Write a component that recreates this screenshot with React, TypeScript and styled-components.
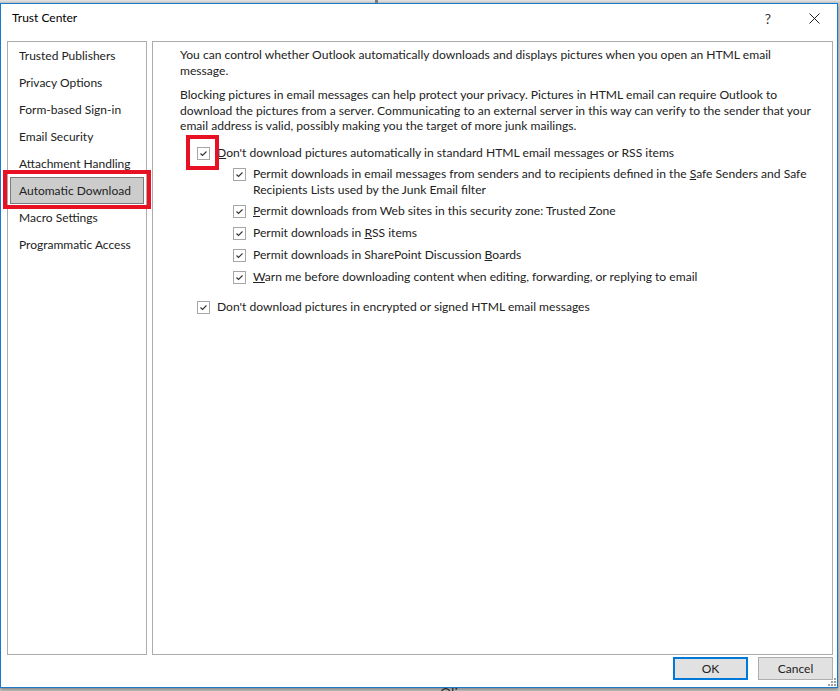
import React from "react";
import styled, { createGlobalStyle } from "styled-components";

const GlobalStyle = createGlobalStyle`
  html, body {
    margin: 0;
    padding: 0;
  }
  body {
    font-family: Lato, "Liberation Sans", Arial, sans-serif;
    font-size: 12px;
    color: #222;
  }
`;

const Screen = styled.div`
  width: 840px;
  height: 691px;
  overflow: hidden;
  background: #c9c9c9;
  display: flex;
  flex-direction: column;
`;

const TopStrip = styled.div`
  height: 3px;
  background: linear-gradient(#e6e6e6, #c4c4c4);
  position: relative;

  &:after {
    position: absolute;
    content: "";
    left: 375px;
    top: 0;
    width: 3px;
    height: 3px;
    background: #7d7d7d;
  }
`;

const Dialog = styled.div`
  width: 838px;
  height: 685px;
  box-sizing: border-box;
  border: 1px solid #1c79c9;
  background: #fff;
  display: flex;
  flex-direction: column;
  position: relative;
  box-shadow: 0 2px 3px rgba(0, 0, 0, 0.35);
`;

const BottomStrip = styled.div`
  height: 3px;
  overflow: hidden;
  padding-left: 440px;
  background: #cfcfcf;
  font-size: 14px;
  line-height: 10px;
  color: #333;
`;

const TitleBar = styled.div`
  height: 37px;
  display: flex;
  align-items: flex-start;
  padding-left: 11px;
`;

const Title = styled.div`
  flex: 1;
  line-height: 28px;
  font-size: 12px;
  color: #000;
`;

const TitleButton = styled.div`
  width: 46px;
  height: 28px;
  display: flex;
  align-items: center;
  justify-content: center;
  font-size: 14px;
  color: #333;
`;

const Body = styled.div`
  height: 614px;
  display: flex;
  gap: 5px;
  padding: 0 4px 0 6px;
`;

const NavPanel = styled.ul`
  width: 140px;
  box-sizing: border-box;
  border: 1px solid #acacac;
  margin: 0;
  padding: 0;
  list-style: none;
`;

const NavItem = styled.li<{ $selected?: boolean }>`
  position: relative;
  height: 27px;
  box-sizing: border-box;
  margin: 0 2px;
  padding-left: 8px;
  display: flex;
  align-items: center;
  border: 1px solid ${(p) => (p.$selected ? "#7a7a7a" : "transparent")};
  background: ${(p) => (p.$selected ? "#cccccc" : "transparent")};
  color: #222;
  white-space: nowrap;
`;

const Mark = styled.span<{ $t: number; $r: number; $b: number; $l: number }>`
  position: absolute;
  top: ${(p) => p.$t}px;
  right: ${(p) => p.$r}px;
  bottom: ${(p) => p.$b}px;
  left: ${(p) => p.$l}px;
  border: 4px solid #e81123;
  pointer-events: none;
`;

const ContentPanel = styled.div`
  flex: 1;
  box-sizing: border-box;
  border: 1px solid #acacac;
  padding: 5px 0 0 27px;
`;

const Para = styled.p`
  margin: 0 0 9px;
  line-height: 15.5px;
  font-size: 12.1px;
  white-space: nowrap;
`;

const OptionRow = styled.div<{ $indent?: boolean; $gap: number }>`
  display: flex;
  align-items: flex-start;
  margin-top: ${(p) => p.$gap}px;
  padding-left: ${(p) => (p.$indent ? 53 : 17)}px;
  line-height: 16px;
  font-size: 12.1px;
  white-space: nowrap;
`;

const BoxWrap = styled.span`
  position: relative;
  flex: none;
  margin: 2px 7px 0 0;
`;

const CheckBox = styled.span`
  display: flex;
  align-items: center;
  justify-content: center;
  width: 13px;
  height: 13px;
  box-sizing: border-box;
  border: 1px solid #a6a6a6;
  background: #fff;
`;

const Footer = styled.div`
  display: flex;
  justify-content: flex-end;
  gap: 10px;
  padding: 2px 4px 7px 0;
`;

const Button = styled.button<{ $primary?: boolean }>`
  width: 75px;
  height: 23px;
  box-sizing: border-box;
  border: ${(p) => (p.$primary ? "2px solid #0078d7" : "1px solid #adadad")};
  background: #e1e1e1;
  font-family: inherit;
  font-size: 12px;
  color: #222;
  padding: 0;
`;

const Grip = styled.svg`
  position: absolute;
  right: 1px;
  bottom: 1px;
`;

function Check() {
  return (
    <CheckBox>
      <svg width="9" height="9" viewBox="0 0 9 9">
        <polyline
          points="1.5,4.5 3.5,6.5 7.5,2.5"
          fill="none"
          stroke="#333"
          strokeWidth="1.1"
        />
      </svg>
    </CheckBox>
  );
}

const navItems = [
  "Trusted Publishers",
  "Privacy Options",
  "Form-based Sign-in",
  "Email Security",
  "Attachment Handling",
  "Automatic Download",
  "Macro Settings",
  "Programmatic Access",
];

export default function App() {
  return (
    <>
      <GlobalStyle />
      <Screen>
        <TopStrip />
        <Dialog>
          <TitleBar>
            <Title>Trust Center</Title>
            <TitleButton>?</TitleButton>
            <TitleButton>
              <svg width="11" height="11" viewBox="0 0 11 11">
                <path d="M0.5 0.5 L10.5 10.5 M10.5 0.5 L0.5 10.5" stroke="#222" strokeWidth="1" />
              </svg>
            </TitleButton>
          </TitleBar>
          <Body>
            <NavPanel>
              {navItems.map((item) => {
                const selected = item === "Automatic Download";
                return (
                  <NavItem key={item} $selected={selected}>
                    {item}
                    {selected ? <Mark $t={-8} $r={-8} $b={-6} $l={-8} /> : null}
                  </NavItem>
                );
              })}
            </NavPanel>
            <ContentPanel>
              <Para>
                You can control whether Outlook automatically downloads and displays pictures when you open an HTML email
                <br />
                message.
              </Para>
              <Para>
                Blocking pictures in email messages can help protect your privacy. Pictures in HTML email can require Outlook to
                <br />
                download the pictures from a server. Communicating to an external server in this way can verify to the sender that your
                <br />
                email address is valid, possibly making you the target of more junk mailings.
              </Para>
              <OptionRow $gap={11}>
                <BoxWrap>
                  <Check />
                  <Mark $t={-12} $r={-9} $b={-10} $l={-11} />
                </BoxWrap>
                <span>
                  <u>D</u>on't download pictures automatically in standard HTML email messages or RSS items
                </span>
              </OptionRow>
              <OptionRow $indent $gap={5}>
                <BoxWrap>
                  <Check />
                </BoxWrap>
                <span>
                  Permit downloads in email messages from senders and to recipients defined in the <u>S</u>afe Senders and Safe
                  <br />
                  Recipients Lists used by the Junk Email filter
                </span>
              </OptionRow>
              <OptionRow $indent $gap={5}>
                <BoxWrap>
                  <Check />
                </BoxWrap>
                <span>
                  <u>P</u>ermit downloads from Web sites in this security zone: Trusted Zone
                </span>
              </OptionRow>
              <OptionRow $indent $gap={6}>
                <BoxWrap>
                  <Check />
                </BoxWrap>
                <span>
                  Permit downloads in <u>R</u>SS items
                </span>
              </OptionRow>
              <OptionRow $indent $gap={6}>
                <BoxWrap>
                  <Check />
                </BoxWrap>
                <span>
                  Permit downloads in SharePoint Discussion <u>B</u>oards
                </span>
              </OptionRow>
              <OptionRow $indent $gap={6}>
                <BoxWrap>
                  <Check />
                </BoxWrap>
                <span>
                  <u>W</u>arn me before downloading content when editing, forwarding, or replying to email
                </span>
              </OptionRow>
              <OptionRow $gap={14}>
                <BoxWrap>
                  <Check />
                </BoxWrap>
                <span>Don't download pictures in encrypted or signed HTML email messages</span>
              </OptionRow>
            </ContentPanel>
          </Body>
          <Footer>
            <Button $primary>OK</Button>
            <Button>Cancel</Button>
          </Footer>
          <Grip width="8" height="8" viewBox="0 0 8 8">
            <g fill="#a0a0a0">
              <rect x="6" y="0" width="2" height="2" />
              <rect x="3" y="3" width="2" height="2" />
              <rect x="6" y="3" width="2" height="2" />
              <rect x="0" y="6" width="2" height="2" />
              <rect x="3" y="6" width="2" height="2" />
              <rect x="6" y="6" width="2" height="2" />
            </g>
          </Grip>
        </Dialog>
        <BottomStrip>Oliver</BottomStrip>
      </Screen>
    </>
  );
}
